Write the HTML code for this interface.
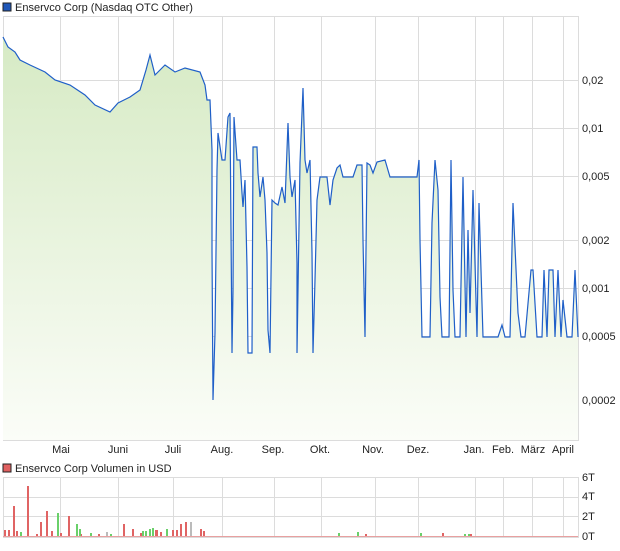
<!DOCTYPE html>
<html><head><meta charset="utf-8"><style>
body{margin:0;background:#fff;font-family:"Liberation Sans",sans-serif;}
svg text{font-family:"Liberation Sans",sans-serif;font-size:11px;fill:#222;}
</style></head><body>
<svg width="620" height="546" xmlns="http://www.w3.org/2000/svg">
<defs><linearGradient id="g" x1="0" y1="37" x2="0" y2="440" gradientUnits="userSpaceOnUse">
<stop offset="0" stop-color="#d6eac4"/><stop offset="1" stop-color="#fbfdf8"/></linearGradient></defs>
<rect x="3" y="3" width="8" height="8" fill="#1f57b8" stroke="#222" stroke-width="1"/>
<text x="15" y="11">Enservco Corp (Nasdaq OTC Other)</text>
<g stroke="#dcdcdc" stroke-width="1" fill="none">
<rect x="3.5" y="16.5" width="575" height="424"/>
<path d="M60.5 17V441M118.5 17V441M173.5 17V441M222.5 17V441M274.5 17V441M321.5 17V441M375.5 17V441M418.5 17V441M475.5 17V441M503.5 17V441M532.5 17V441M563.5 17V441"/>
<path d="M3 80.5H579M3 128.5H579M3 176.5H579M3 240.5H579M3 288.5H579M3 336.5H579M3 400.5H579"/>
</g>
<path d="M3 37L8 47L15 52L20 60L30 65L45 72L55 80L70 85L85 95L95 105L110 112L118 103L130 97L140 90L146 70L150 55L155 75L165 65L175 72L185 68L200 72L205 85L207 100L210 100L212 150L212 250L213 400L215 333L217 170L218 133L222 160L225 160L228 117L230 113L231 230L232 353L233 290L234 117L237 160L240 160L242 193L243 207L245 180L247 267L248 353L252 353L253 147L257 147L258 173L260 197L263 177L265 200L267 253L268 330L270 353L272 200L275 203L278 205L282 187L285 203L288 123L290 177L292 197L295 180L297 263L297 353L300 163L303 88L305 160L307 173L310 160L312 253L313 353L315 280L317 200L320 177L327 177L330 205L333 180L337 168L340 165L343 177L353 177L357 165L362 165L363 240L365 337L367 163L370 165L373 173L377 162L385 160L390 177L417 177L419 160L420 240L422 337L430 337L432 223L435 160L438 190L440 297L442 337L449 337L451 160L453 290L455 337L460 337L463 177L466 337L468 230L470 313L473 190L477 337L479 203L483 337L498 337L502 325L505 337L510 337L513 203L518 313L521 337L525 337L531 270L533 270L537 337L542 337L544 270L547 337L549 270L553 270L555 337L558 270L561 337L563 300L567 337L572 337L575 270L578 337L578 440L3 440Z" fill="url(#g)"/>
<path id="p" d="M3 37L8 47L15 52L20 60L30 65L45 72L55 80L70 85L85 95L95 105L110 112L118 103L130 97L140 90L146 70L150 55L155 75L165 65L175 72L185 68L200 72L205 85L207 100L210 100L212 150L212 250L213 400L215 333L217 170L218 133L222 160L225 160L228 117L230 113L231 230L232 353L233 290L234 117L237 160L240 160L242 193L243 207L245 180L247 267L248 353L252 353L253 147L257 147L258 173L260 197L263 177L265 200L267 253L268 330L270 353L272 200L275 203L278 205L282 187L285 203L288 123L290 177L292 197L295 180L297 263L297 353L300 163L303 88L305 160L307 173L310 160L312 253L313 353L315 280L317 200L320 177L327 177L330 205L333 180L337 168L340 165L343 177L353 177L357 165L362 165L363 240L365 337L367 163L370 165L373 173L377 162L385 160L390 177L417 177L419 160L420 240L422 337L430 337L432 223L435 160L438 190L440 297L442 337L449 337L451 160L453 290L455 337L460 337L463 177L466 337L468 230L470 313L473 190L477 337L479 203L483 337L498 337L502 325L505 337L510 337L513 203L518 313L521 337L525 337L531 270L533 270L537 337L542 337L544 270L547 337L549 270L553 270L555 337L558 270L561 337L563 300L567 337L572 337L575 270L578 337" fill="none" stroke="#1f5fc8" stroke-width="1.2"/>
<g text-anchor="start">
<text x="582" y="84">0,02</text><text x="582" y="132">0,01</text><text x="582" y="180">0,005</text>
<text x="582" y="244">0,002</text><text x="582" y="292">0,001</text><text x="582" y="340">0,0005</text><text x="582" y="404">0,0002</text>
</g>
<g text-anchor="middle">
<text x="61" y="453">Mai</text><text x="118" y="453">Juni</text><text x="173" y="453">Juli</text><text x="222" y="453">Aug.</text>
<text x="273" y="453">Sep.</text><text x="320" y="453">Okt.</text><text x="373" y="453">Nov.</text><text x="418" y="453">Dez.</text>
<text x="474" y="453">Jan.</text><text x="503" y="453">Feb.</text><text x="533" y="453">März</text><text x="563" y="453">April</text>
</g>
<rect x="3" y="464" width="8" height="8" fill="#e06060" stroke="#222"/>
<text x="15" y="472">Enservco Corp Volumen in USD</text>
<g stroke="#dcdcdc" fill="none">
<rect x="3.5" y="477.5" width="575" height="60"/>
<path d="M3 497.5H579M3 516.5H579M60.5 478V538M118.5 478V538M173.5 478V538M222.5 478V538M274.5 478V538M321.5 478V538M375.5 478V538M418.5 478V538M475.5 478V538M503.5 478V538M532.5 478V538M563.5 478V538"/>
</g>
<g fill="#e06464">
<rect x="4" y="530" width="2" height="7"/><rect x="8" y="530" width="2" height="7"/><rect x="13" y="506" width="2" height="31"/><rect x="16" y="531" width="2" height="6"/>
<rect x="27" y="486" width="2" height="51"/><rect x="40" y="522" width="2" height="15"/><rect x="46" y="511" width="2" height="26"/><rect x="51" y="531" width="2" height="6"/>
<rect x="68" y="516" width="2" height="21"/><rect x="123" y="524" width="2" height="13"/><rect x="156" y="530" width="2" height="7"/><rect x="160" y="532" width="2" height="5"/>
<rect x="172" y="530" width="2" height="7"/><rect x="180" y="524" width="2" height="13"/><rect x="185" y="522" width="2" height="15"/><rect x="200" y="529" width="2" height="8"/><rect x="203" y="531" width="2" height="6"/>
<rect x="60" y="533" width="2" height="4"/><rect x="36" y="534" width="2" height="3"/><rect x="80" y="534" width="2" height="3"/><rect x="98" y="534" width="2" height="3"/><rect x="140" y="533" width="2" height="4"/>
<rect x="132" y="529" width="2" height="8"/><rect x="155" y="530" width="2" height="7"/><rect x="176" y="530" width="2" height="7"/>
<rect x="365" y="534" width="2" height="3"/><rect x="442" y="533" width="2" height="4"/><rect x="470" y="534" width="2" height="3"/>
</g>
<g fill="#6ad06a">
<rect x="20" y="532" width="2" height="5"/><rect x="57" y="513" width="2" height="24"/><rect x="76" y="524" width="2" height="13"/><rect x="79" y="529" width="2" height="8"/>
<rect x="145" y="531" width="2" height="6"/><rect x="149" y="529" width="2" height="8"/><rect x="166" y="529" width="2" height="8"/><rect x="338" y="533" width="2" height="4"/><rect x="357" y="532" width="2" height="5"/><rect x="420" y="533" width="2" height="4"/><rect x="464" y="534" width="2" height="3"/><rect x="468" y="534" width="2" height="3"/><rect x="90" y="533" width="2" height="4"/><rect x="110" y="534" width="2" height="3"/><rect x="152" y="528" width="2" height="9"/><rect x="142" y="531" width="2" height="6"/>
</g>
<g fill="#bbb"><rect x="190" y="522" width="2" height="15"/><rect x="106" y="532" width="2" height="5"/></g>
<rect x="3" y="536" width="575" height="1" fill="#e8a0a0"/>
<text x="582" y="481">6T</text><text x="582" y="500">4T</text><text x="582" y="520">2T</text><text x="582" y="540">0T</text>
</svg>
</body></html>
